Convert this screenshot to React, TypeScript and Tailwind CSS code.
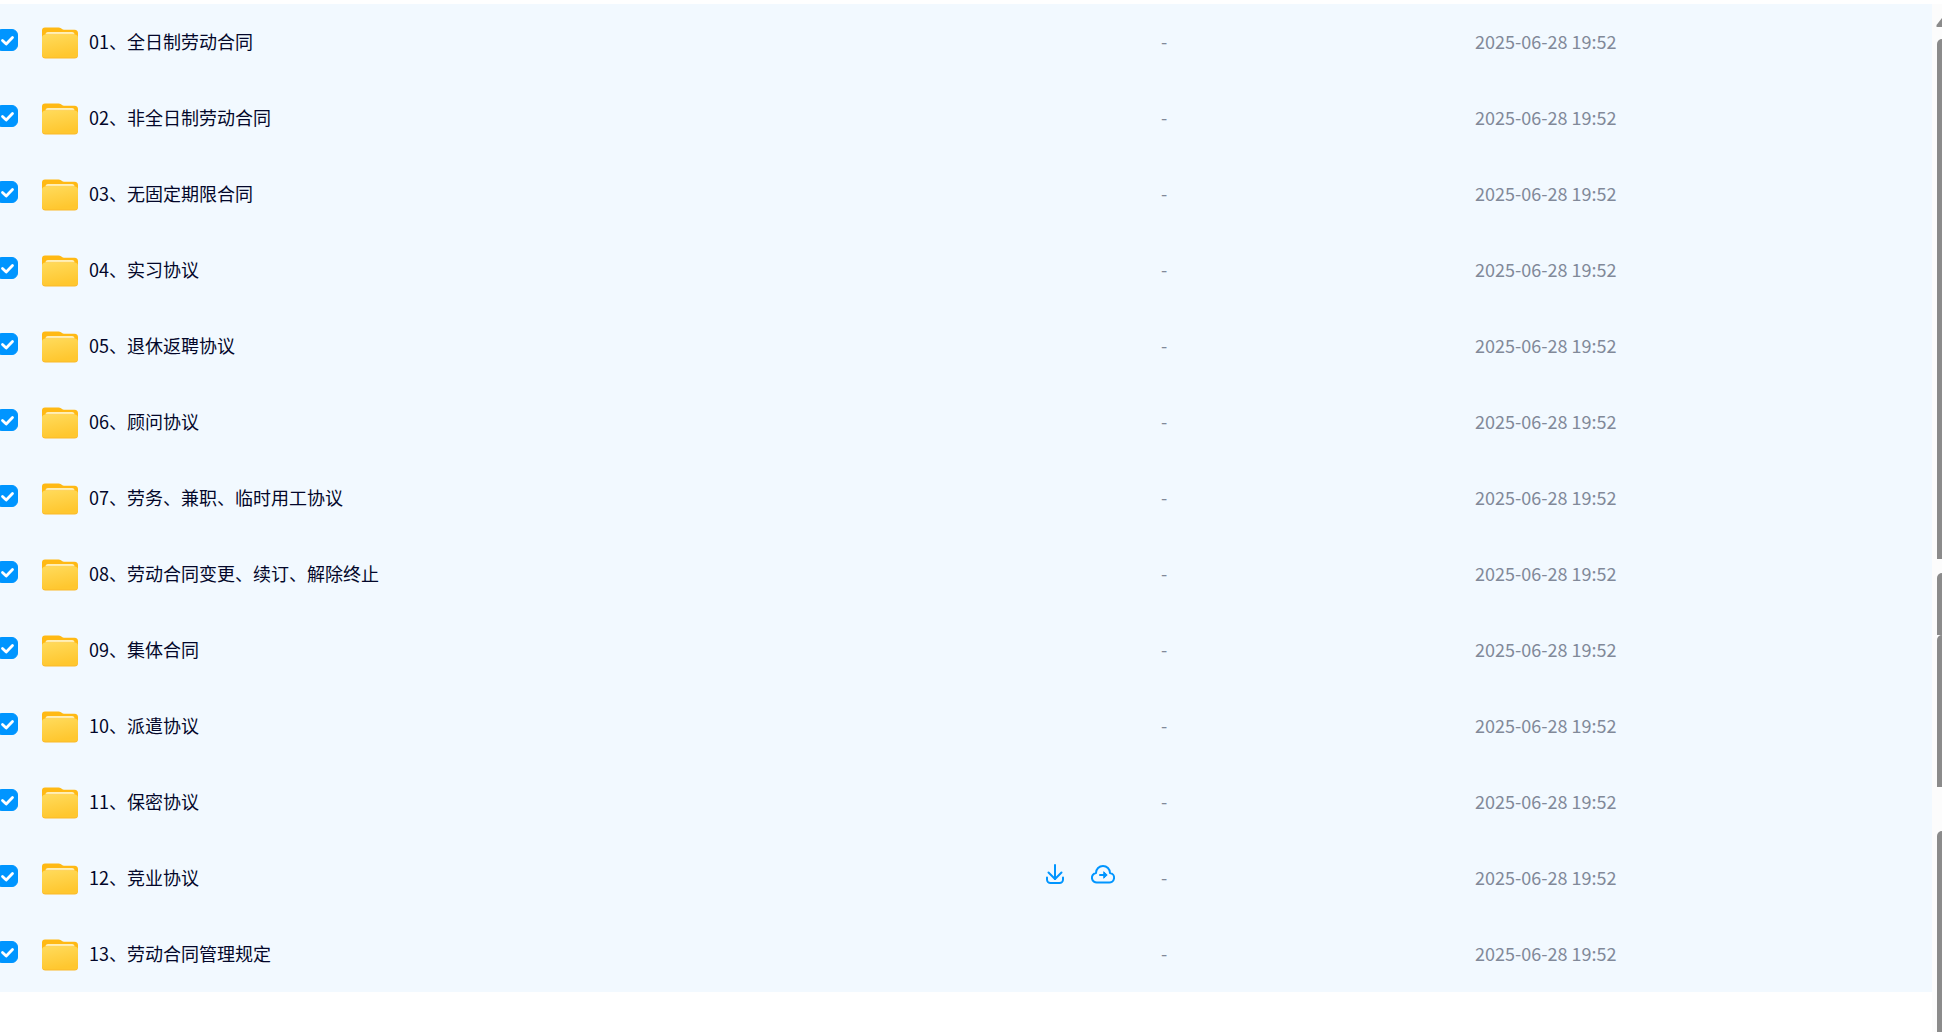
import React from 'react';

interface FolderItem {
  name: string;
  time: string;
  active?: boolean;
}

const folders: FolderItem[] = [
  { name: '01、全日制劳动合同', time: '2025-06-28 19:52' },
  { name: '02、非全日制劳动合同', time: '2025-06-28 19:52' },
  { name: '03、无固定期限合同', time: '2025-06-28 19:52' },
  { name: '04、实习协议', time: '2025-06-28 19:52' },
  { name: '05、退休返聘协议', time: '2025-06-28 19:52' },
  { name: '06、顾问协议', time: '2025-06-28 19:52' },
  { name: '07、劳务、兼职、临时用工协议', time: '2025-06-28 19:52' },
  { name: '08、劳动合同变更、续订、解除终止', time: '2025-06-28 19:52' },
  { name: '09、集体合同', time: '2025-06-28 19:52' },
  { name: '10、派遣协议', time: '2025-06-28 19:52' },
  { name: '11、保密协议', time: '2025-06-28 19:52' },
  { name: '12、竞业协议', time: '2025-06-28 19:52', active: true },
  { name: '13、劳动合同管理规定', time: '2025-06-28 19:52' },
];

function FolderIcon() {
  return (
    <svg className="mt-0.5 w-9 h-8 shrink-0" viewBox="0 0 36 32" aria-hidden="true">
      <defs>
        <linearGradient id="folder-front" x1="0" y1="0" x2="0.3" y2="1">
          <stop offset="0" stopColor="#ffdb5c" />
          <stop offset="1" stopColor="#ffc72f" />
        </linearGradient>
        <linearGradient id="folder-paper" x1="0" y1="0" x2="0" y2="1">
          <stop offset="0" stopColor="#fff0bd" />
          <stop offset="1" stopColor="#ffdf75" />
        </linearGradient>
      </defs>
      <path d="M0 3.500A3 3 0 0 1 3 0.500h13.500c1 0 1.800.3 2.500.8l1 .8c.6.4 1.200.7 2 .7H32.500A3.500 3.500 0 0 1 36 6.300V20H0z" fill="#ffb914" />
      <path d="M3.500 7.500A2.500 2.500 0 0 1 6 5h24a2.500 2.500 0 0 1 2.500 2.500V12h-29z" fill="url(#folder-paper)" />
      <path d="M0 11c0-2.200 1.300-3.500 3.500-3.500h29c2.200 0 3.500 1.300 3.500 3.500V28a3.500 3.500 0 0 1-3.500 3.500h-29A3.500 3.500 0 0 1 0 28z" fill="#fbb928" />
      <path d="M0 11c0-2.200 1.300-3.500 3.500-3.500h29c2.200 0 3.500 1.300 3.500 3.500V27a3.500 3.500 0 0 1-3.500 3.500h-29A3.500 3.500 0 0 1 0 27z" fill="url(#folder-front)" />
    </svg>
  );
}

function DownloadIcon() {
  return (
    <svg className="size-6" viewBox="0 0 24 24" fill="none" stroke="#0095ff" strokeWidth="2" strokeLinecap="round" strokeLinejoin="round" aria-hidden="true">
      <path d="M12 3v14" />
      <path d="M5.500 10.500L12 17l6.500-6.500" />
      <path d="M4 15.500v2A3.500 3.500 0 0 0 7.500 21h9a3.500 3.500 0 0 0 3.500-3.500v-2" />
    </svg>
  );
}

function CloudSaveIcon() {
  return (
    <svg className="size-6" viewBox="0 0 24 24" fill="none" stroke="#0095ff" strokeWidth="2" strokeLinecap="round" strokeLinejoin="round" aria-hidden="true">
      <path d="M6.500 20.500h11a4.800 4.800 0 0 0 1.500-9.500 7 7 0 0 0-14 0 4.800 4.800 0 0 0 1.500 9.500z" />
      <path d="M9 13h4" />
      <path d="M13 10l3.200 3-3.200 3z" fill="#0095ff" strokeWidth="1" />
    </svg>
  );
}

function Checkbox({ label }: { label: string }) {
  return (
    <span className="grid size-[22px] shrink-0 place-items-center">
      <input
        type="checkbox"
        defaultChecked
        aria-label={label}
        className="peer col-start-1 row-start-1 size-[22px] appearance-none rounded-md border border-[#c4d0dd] bg-white checked:border-[#0095ff] checked:bg-[#0095ff]"
      />
      <svg className="pointer-events-none invisible col-start-1 row-start-1 size-[22px] peer-checked:visible" viewBox="0 0 22 22" fill="none" stroke="#fff" strokeWidth="2.800" strokeLinecap="round" strokeLinejoin="round" aria-hidden="true">
        <path d="M6.500 11.500l3.700 3.500 6.300-6.500" />
      </svg>
    </span>
  );
}

function FolderRow({ item }: { item: FolderItem }) {
  return (
    <tr className="h-[76px] bg-[#f2f9ff]">
      <td className="p-0">
        <div className="-ml-1 flex items-center pr-11">
          <div className="pb-1">
            <Checkbox label={item.name} />
          </div>
          <div className="ml-6 flex min-w-0 flex-1 items-center">
            <FolderIcon />
            <span className="ml-[11px] truncate pb-0.5 text-[#03072a]">{item.name}</span>
          </div>
          {item.active && (
            <div className="flex gap-6 pr-0.5 pb-2">
              <button type="button" aria-label="下载" className="size-6">
                <DownloadIcon />
              </button>
              <button type="button" aria-label="转存" className="size-6">
                <CloudSaveIcon />
              </button>
            </div>
          )}
        </div>
      </td>
      <td className="p-0 pb-0.5 text-[#818999]">-</td>
      <td className="p-0 pb-0.5 text-[#818999]">{item.time}</td>
    </tr>
  );
}

// Right edge: stacked scrollbar pieces, cut off by the window
function ScrollStrip() {
  return (
    <div className="flex w-2.5 shrink-0 flex-col bg-[#fcfcfc] pl-1" aria-hidden="true">
      <svg className="mt-3.5 h-[9px] w-1.5" viewBox="0 0 6 9">
        <path d="M6 0L0.500 7v2H6z" fill="#8b8b8b" />
      </svg>
      <div className="ml-px mt-3 h-[520px] rounded-tl-md bg-[#8b8b8b]" />
      <div className="ml-px mt-3.5 h-[62px] rounded-tl-md bg-[#8b8b8b]" />
      <div className="ml-px h-[152px] rounded-tl-md bg-[#8b8b8b]" />
      <div className="ml-px mt-11 flex-1 rounded-tl-md bg-[#8b8b8b]" />
    </div>
  );
}

export default function App() {
  return (
    <div className="flex min-h-screen overflow-hidden bg-white pt-1 font-['Noto_Sans_CJK_SC',sans-serif] text-lg">
      <div className="min-w-0 flex-1 overflow-hidden">
        <table className="w-full table-fixed border-collapse text-left">
          <colgroup>
            <col />
            <col className="w-[314px]" />
            <col className="w-[457px]" />
          </colgroup>
          <tbody>
            {folders.map(item => (
              <FolderRow key={item.name} item={item} />
            ))}
          </tbody>
        </table>
      </div>
      <ScrollStrip />
    </div>
  );
}
